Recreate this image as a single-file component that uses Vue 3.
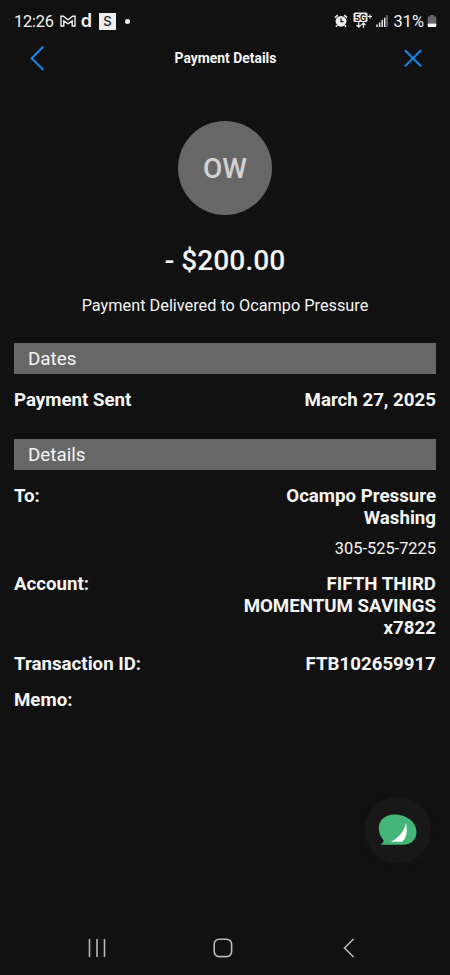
<template>
    <main>
        <div id="status-bar">
            <div id="status-left">
                <span id="clock">12:26</span>
                <svg id="mail-icon" width="16" height="12" viewBox="0 0 16 12">
                    <path d="M1 11V1.2H3.4L8 4.9L12.6 1.2H15V11H12.2V5.8L8 8.9L3.8 5.8V11Z" />
                </svg>
                <span id="d-icon">d</span>
                <span id="s-icon">S</span>
                <span id="dot"></span>
            </div>
            <div id="status-right">
                <svg id="alarm-icon" width="14" height="14" viewBox="0 0 14 14">
                    <path d="M1 3.6L3.8 1.2M13 3.6L10.2 1.2M3.2 11.2L2 12.8M10.8 11.2L12 12.8" stroke="#eee" stroke-width="1.7" />
                    <circle cx="7" cy="7.3" r="5.4" fill="#eee" />
                    <path d="M7 4.3V7.6H9.6" fill="none" stroke="#111" stroke-width="1.2" />
                </svg>
                <svg id="network-icon" width="20" height="17" viewBox="0 0 20 17">
                    <rect x="0.5" y="0.5" width="14" height="9.5" rx="1.5" fill="#eee" />
                    <text x="7.5" y="8.5" text-anchor="middle">5G</text>
                    <path d="M15 4.5H19M17 2.5V6.5" stroke="#eee" stroke-width="1.2" />
                    <path d="M5.7 9.5V15M3.6 13L5.7 15.2L7.8 13M10.5 16V11M8.4 13L10.5 10.8L12.6 13" fill="none" stroke="#eee" stroke-width="1.2" />
                </svg>
                <svg id="signal-icon" width="12" height="12" viewBox="0 0 12 12">
                    <path d="M1 9.5V12M3.6 7.5V12M6.2 5V12M8.7 2.8V12" stroke="#eee" stroke-width="1.5" />
                    <path d="M11 0V12" stroke="#777" stroke-width="1.5" />
                </svg>
                <span id="battery-text">31%</span>
                <svg width="10" height="14" viewBox="0 0 10 14">
                    <path d="M3 1H7V2.2H8A1.3 1.3 0 0 1 9.3 3.5V9.6H0.7V3.5A1.3 1.3 0 0 1 2 2.2H3Z" fill="#666" />
                    <path d="M0.7 9.6H9.3V11.7A1.3 1.3 0 0 1 8 13H2A1.3 1.3 0 0 1 0.7 11.7Z" fill="#fff" />
                </svg>
            </div>
        </div>

        <header>
            <button class="header-button" aria-label="Back">
                <svg width="16" height="26" viewBox="0 0 16 26">
                    <path d="M13.7 2.2L2.7 13.2L13.7 24.2" />
                </svg>
            </button>
            <h1>Payment Details</h1>
            <button class="header-button" aria-label="Close">
                <svg width="18" height="18" viewBox="0 0 18 18">
                    <path d="M1.5 1.8L16.5 16.8M16.5 1.8L1.5 16.8" />
                </svg>
            </button>
        </header>

        <div id="summary">
            <div id="avatar"><span>OW</span></div>
            <p id="amount">- $200.00</p>
            <p id="delivered">Payment Delivered to Ocampo Pressure</p>
        </div>

        <section v-for="section in sections" :key="section.title">
            <h2>{{ section.title }}</h2>
            <div v-for="row in section.rows" :key="row.label" class="row">
                <span class="label">{{ row.label }}</span>
                <div class="value">
                    <p v-for="line in row.lines" :key="line">{{ line }}</p>
                    <p v-if="row.phone" class="phone">{{ row.phone }}</p>
                </div>
            </div>
        </section>

        <button id="chat-button" aria-label="Chat">
            <svg width="40" height="34" viewBox="0 0 40 34">
                <path d="M2.3 31.8C4.5 30.5 5.7 29 5.6 27.2C2.5 23.8 0.8 19.6 0.8 15.2C0.8 7.2 7.5 1.6 16.3 1.6C28.5 1.6 38.5 9.2 38.5 19C38.5 27.3 32.5 31.8 24.5 31.8Z" fill="#44b677" />
                <path d="M28.1 10.2C29.6 17.5 28.8 25.2 24 28.8H12.8C19.8 25.8 25.6 19.2 28.1 10.2Z" fill="#fff" />
            </svg>
        </button>

        <nav>
            <svg width="18" height="20" viewBox="0 0 18 20">
                <path d="M1.5 1V19M9 1V19M16.5 1V19" />
            </svg>
            <svg id="home-icon" width="20" height="20" viewBox="0 0 20 20">
                <rect x="1.2" y="1.2" width="17.4" height="17.4" rx="5" />
            </svg>
            <svg width="12" height="20" viewBox="0 0 12 20">
                <path d="M10.6 1L1.5 10L10.6 19" />
            </svg>
        </nav>
    </main>
</template>

<script setup>
    const sections = [
        {
            title: 'Dates',
            rows: [
                { label: 'Payment Sent', lines: ['March 27, 2025'] }
            ]
        },
        {
            title: 'Details',
            rows: [
                { label: 'To:', lines: ['Ocampo Pressure', 'Washing'], phone: '305-525-7225' },
                { label: 'Account:', lines: ['FIFTH THIRD', 'MOMENTUM SAVINGS', 'x7822'] },
                { label: 'Transaction ID:', lines: ['FTB102659917'] },
                { label: 'Memo:', lines: [] }
            ]
        }
    ];
</script>

<style>
    body {
        background-color: #111;
    }
</style>

<style scoped>
    main {
        position: relative;
        box-sizing: border-box;
        width: 450px;
        height: 975px;
        display: flex;
        flex-direction: column;
        background-color: #111;
        color: #f5f5f5;
        font-family: Roboto, sans-serif;
        overflow: hidden;
    }

    p, h1, h2 {
        margin: 0;
    }

    svg {
        display: block;
        flex-shrink: 0;
    }

    button {
        padding: 0;
        border: none;
        background: none;
    }

    #status-bar {
        height: 42px;
        padding: 0 13px 0 14px;
        display: flex;
        justify-content: space-between;
        flex-shrink: 0;
    }

    #status-left, #status-right {
        display: flex;
        align-items: center;
    }

    #clock, #battery-text {
        font-size: 16.4px;
        line-height: 20px;
        padding-top: 1px;
    }

    #clock {
        letter-spacing: -0.2px;
    }

    #mail-icon {
        margin-left: 6px;
    }

    #mail-icon path {
        fill: none;
        stroke: #eee;
        stroke-width: 1.4;
    }

    #d-icon {
        margin-left: 5px;
        font-family: Inter, sans-serif;
        font-size: 18px;
        font-weight: 600;
        line-height: 18px;
    }

    #s-icon {
        width: 17px;
        height: 17px;
        margin-left: 7px;
        background-color: #eee;
        color: #222;
        font-family: Inter, sans-serif;
        font-size: 13px;
        font-weight: 500;
        line-height: 17px;
        text-align: center;
    }

    #dot {
        width: 5px;
        height: 5px;
        margin-left: 9px;
        border-radius: 50%;
        background-color: #eee;
    }

    #network-icon {
        margin-left: 5px;
        margin-bottom: 2px;
    }

    #network-icon text {
        fill: #111;
        font-size: 9px;
        font-weight: 700;
    }

    #signal-icon {
        margin-left: 3px;
    }

    #battery-text {
        margin: 0 3px 0 6px;
    }

    header {
        height: 32px;
        padding: 0 28px 0 29px;
        display: flex;
        align-items: center;
        justify-content: space-between;
        flex-shrink: 0;
    }

    .header-button {
        width: 18px;
        display: flex;
    }

    .header-button path {
        fill: none;
        stroke: #1683e0;
        stroke-width: 2.2;
        stroke-linecap: round;
    }

    h1 {
        font-size: 13.9px;
        font-weight: 700;
        line-height: 20px;
    }

    #summary {
        padding-top: 47px;
        display: flex;
        flex-direction: column;
        align-items: center;
    }

    #avatar {
        width: 94px;
        height: 94px;
        display: flex;
        align-items: center;
        justify-content: center;
        border-radius: 50%;
        background-color: #676767;
        color: #d2d2d2;
        font-size: 28px;
        font-weight: 500;
    }

    #amount {
        margin-top: 28px;
        font-size: 28.2px;
        font-weight: 500;
        line-height: 36px;
    }

    #delivered {
        margin: 17px 0 27px;
        font-size: 16.3px;
        line-height: 20px;
    }

    section {
        padding: 0 14px;
        margin-bottom: 16px;
    }

    h2 {
        height: 31px;
        padding-left: 14px;
        background-color: #676767;
        font-size: 18.8px;
        font-weight: 400;
        line-height: 33px;
    }

    .row {
        padding: 15px 0 0;
        display: flex;
        justify-content: space-between;
        font-size: 18.7px;
        font-weight: 700;
        line-height: 22px;
    }

    .row + .row {
        padding-top: 14px;
    }

    .row:last-child {
        padding-bottom: 12px;
    }

    .value {
        text-align: right;
    }

    .phone {
        margin-top: 10px;
        font-size: 16.4px;
        font-weight: 400;
        line-height: 20px;
    }

    #chat-button {
        position: absolute;
        right: 19px;
        bottom: 112px;
        width: 66px;
        height: 66px;
        display: flex;
        align-items: center;
        justify-content: center;
        border-radius: 50%;
        background-color: #181818;
        box-shadow: 0 1px 5px #161616;
    }

    nav {
        height: 55px;
        margin-top: auto;
        padding: 0 95px 0 88px;
        display: flex;
        align-items: center;
        justify-content: space-between;
        flex-shrink: 0;
    }

    nav path, nav rect {
        fill: none;
        stroke: #b8b8b8;
        stroke-width: 1.6;
    }

    #home-icon {
        margin-right: 4px;
    }
</style>
